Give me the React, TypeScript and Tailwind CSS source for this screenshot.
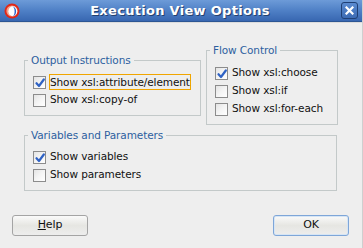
import React from 'react';

function Check({ on }: { on?: boolean }) {
  return (
    <span className="relative w-[13px] h-[13px] shrink-0 border border-[#8c8c8c] bg-gradient-to-br from-[#e4e4e4] via-[#f4f4f4] to-[#ffffff]">
      {on && (
        <svg className="absolute left-[1px] top-[1px]" width="10" height="10" viewBox="0 0 10 10">
          <path d="M1.5 5.2 L4 8 L8.8 1.5" fill="none" stroke="#2f62c4" strokeWidth="2.2" strokeLinecap="round" strokeLinejoin="round" />
        </svg>
      )}
    </span>
  );
}

function Row({ label, on, focus }: { label: string; on?: boolean; focus?: boolean }) {
  return (
    <div className="flex items-center h-[18px]">
      <Check on={on} />
      <span
        className={
          focus
            ? 'ml-[3px] h-[16px] leading-[14px] border border-[#f0a500] whitespace-nowrap'
            : 'ml-[4px] whitespace-nowrap'
        }
      >
        {label}
      </span>
    </div>
  );
}

function Group({ title, className, children }: { title: string; className: string; children: React.ReactNode }) {
  return (
    <fieldset className={'border border-[#c3c9c9] pl-[8px] pb-[6px] ' + className}>
      <legend className="-ml-[5px] px-[3px] leading-[13px] text-[#2d5f9f]">{title}</legend>
      {children}
    </fieldset>
  );
}

export default function App() {
  return (
    <div className="w-[363px] h-[248px] bg-[#eeeeee] flex flex-col text-[10.5px] tracking-[-0.1px] text-[#111111] border-r border-[#cfcfcf] font-['DejaVu_Sans',sans-serif]">
      {/* Title bar */}
      <div className="h-[22px] shrink-0 flex items-center bg-gradient-to-b from-[#6d9bd8] via-[#4f80c6] to-[#3867b1] border-b border-[#2c5694]">
        <svg className="ml-[3px]" width="18" height="18" viewBox="0 0 18 18">
          <circle cx="9" cy="9" r="7.5" fill="#e02818" />
          <circle cx="9" cy="9" r="5.6" fill="#f6a08a" />
          <ellipse cx="9.8" cy="9.3" rx="4.4" ry="5" fill="#ffffff" />
          <path d="M9.5 4.5 A4.5 5 0 0 1 9.5 14.3 A2.6 5 0 0 0 9.5 4.5 Z" fill="#2c63c8" />
        </svg>
        <div className="flex-1 text-center text-white font-bold text-[13px] tracking-[0.3px] [text-shadow:1px_1px_0_#23406e] pr-[2px]">
          Execution View Options
        </div>
        <div className="mr-[4px] w-[17px] h-[17px] rounded-[3px] border border-[#1f3f74] bg-gradient-to-b from-[#5b8bd0] to-[#3c6bb4] flex items-center justify-center">
          <svg width="9" height="9" viewBox="0 0 9 9">
            <path d="M1.5 1.5 L7.5 7.5 M7.5 1.5 L1.5 7.5" stroke="#ffffff" strokeWidth="2.2" strokeLinecap="square" />
          </svg>
        </div>
      </div>
      <div className="h-[1px] bg-[#dcdcdc]" />

      {/* Groups */}
      <div className="flex items-start">
        <Group title="Output Instructions" className="ml-[24px] mt-[31px] w-[177px] pt-[6px]">
          <Row label="Show xsl:attribute/element" on focus />
          <Row label="Show xsl:copy-of" />
        </Group>
        <Group title="Flow Control" className="ml-[5px] mt-[21px] w-[132px] pt-[7px]">
          <Row label="Show xsl:choose" on />
          <Row label="Show xsl:if" />
          <Row label="Show xsl:for-each" />
        </Group>
      </div>

      <Group title="Variables and Parameters" className="ml-[24px] mt-[4px] w-[313px] pt-[6px]">
        <Row label="Show variables" on />
        <Row label="Show parameters" />
      </Group>

      {/* Buttons */}
      <div className="flex justify-between px-[12px] mt-[24px] pr-[13px]">
        <button className="w-[76px] h-[21px] rounded-[3px] border border-[#a4a4a4] bg-gradient-to-b from-[#fafafa] via-[#e6e6e2] to-[#ededed] text-[11px]">
          <span className="underline">H</span>elp
        </button>
        <button className="w-[76px] h-[21px] rounded-[3px] border border-[#7ea6d8] shadow-[inset_0_0_0_1px_#d6e5f5] bg-gradient-to-b from-[#fafafa] via-[#e6e6e2] to-[#ededed] text-[11px]">
          OK
        </button>
      </div>
    </div>
  );
}
